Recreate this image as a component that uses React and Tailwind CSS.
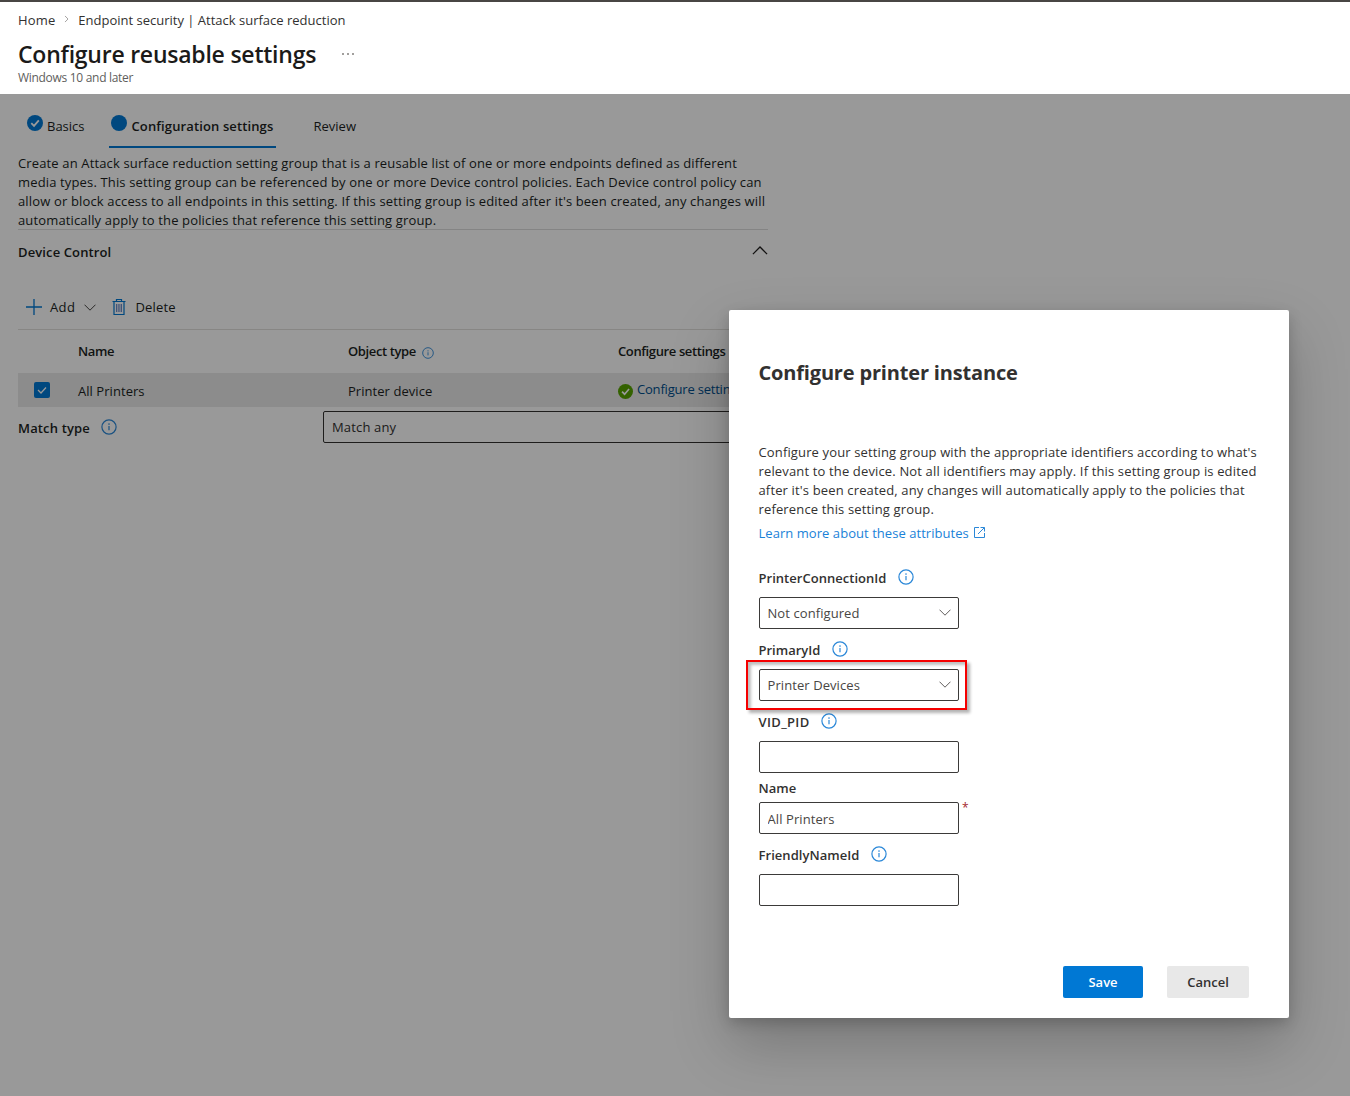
import React, { useState } from 'react';
import clsx from 'clsx';

const InfoIcon = ({ className }) => (
  <svg className={className} viewBox="0 0 16 16" fill="none">
    <circle cx="8" cy="8" r="7.1" stroke="#2b88d8" strokeWidth="1.2" />
    <path d="M8 7v4.2" stroke="#2b88d8" strokeWidth="1.2" />
    <circle cx="8" cy="5.1" r="0.8" fill="#2b88d8" />
  </svg>
);

const ChevronIcon = ({ className }) => (
  <svg className={className} viewBox="0 0 12 7" fill="none">
    <path d="M0.5 0.7L6 6.2L11.5 0.7" stroke="currentColor" strokeWidth="1" />
  </svg>
);

const CheckCircleIcon = ({ className }) => (
  <svg className={className} viewBox="0 0 16 16">
    <circle cx="8" cy="8" r="8" fill="currentColor" />
    <path d="M4.3 8.2L7 10.9L11.8 5.4" fill="none" stroke="#fff" strokeWidth="1.8" />
  </svg>
);

const TrashIcon = () => (
  <svg className="h-4 w-3.5" viewBox="0 0 14 16" fill="none">
    <path d="M0.5 2.5h13M4.5 2.5v-2h5v2M2 2.5v13h10v-13" stroke="#0078d4" strokeWidth="1.2" />
    <path d="M4.5 5v8M6.2 5v8M7.9 5v8M9.5 5v8" stroke="#5c7fc4" strokeWidth="0.9" />
  </svg>
);

const ExternalIcon = () => (
  <svg className="mb-[3px] h-[11px] w-[11px]" viewBox="0 0 11 11" fill="none" stroke="#2b88d8">
    <path d="M5 0.5H0.5v10h10V6" />
    <path d="M6.5 0.5h4v4M10.3 0.7L4 7" />
  </svg>
);

const FieldLabel = ({ children, info = true, className }) => (
  <div className="flex h-5 items-center">
    <span className={clsx('-ml-[0.5px] pt-0.5 text-[13px] font-semibold', className)}>{children}</span>
    {info && <InfoIcon className="mb-[3px] ml-[11.5px] h-4 w-4" />}
  </div>
);

const boxClass = 'flex h-8 w-[200px] items-center rounded-[2px] border border-[#3b3a39] bg-white px-[7.5px] pt-px text-[13px] tracking-[0.08px] text-[#484644]';

const SelectBox = ({ value }) => (
  <button className={clsx(boxClass, 'justify-between')}>
    <span>{value}</span>
    <ChevronIcon className="mb-0.5 h-[7px] w-3 text-[#605e5c]" />
  </button>
);

const TextBox = ({ value, onChange }) => (
  <input className={boxClass} value={value} onChange={(e) => onChange(e.target.value)} />
);

const Lines = ({ lines, className }) => (
  <p className={clsx('text-[13px] leading-[19px] tracking-[0.147px] whitespace-nowrap', className)}>
    {lines.map((line) => (
      <span key={line} className="block first:tracking-[0.14px]">{line}</span>
    ))}
  </p>
);

const groupDescription = [
  'Create an Attack surface reduction setting group that is a reusable list of one or more endpoints defined as different',
  'media types. This setting group can be referenced by one or more Device control policies. Each Device control policy can',
  "allow or block access to all endpoints in this setting. If this setting group is edited after it's been created, any changes will",
  'automatically apply to the policies that reference this setting group.',
];

const instanceDescription = [
  "Configure your setting group with the appropriate identifiers according to what's",
  'relevant to the device. Not all identifiers may apply. If this setting group is edited',
  "after it's been created, any changes will automatically apply to the policies that",
  'reference this setting group.',
];

const PageHeader = () => (
  <header className="h-[94px] border-t-2 border-[#484644] bg-white pl-[18px]">
    <nav className="flex h-9 items-center pt-px text-[13px] text-[#323130]">
      <span className="tracking-[0.15px]">Home</span>
      <ChevronIcon className="mx-[8px] mb-[3px] h-1 w-[7px] -rotate-90 text-[#605e5c]" />
      <span>Endpoint security | Attack surface reduction</span>
    </nav>
    <div className="flex h-8 items-center">
      <h1 className="text-[23px] font-semibold tracking-[-0.23px] text-[#1b1a19]">Configure reusable settings</h1>
      <div className="ml-[26px] flex gap-[3px]">
        <i className="h-0.5 w-0.5 bg-[#a19f9d]" />
        <i className="h-0.5 w-0.5 bg-[#a19f9d]" />
        <i className="h-0.5 w-0.5 bg-[#a19f9d]" />
      </div>
    </div>
    <p className="text-[12px] leading-4 tracking-[-0.3px] text-[#605e5c]">Windows 10 and later</p>
  </header>
);

const Tabs = () => (
  <div className="flex h-[54px] pl-[9px] text-[13px]">
    <div className="flex w-[57px] pt-[21px]">
      <CheckCircleIcon className="h-4 w-4 shrink-0 text-[#0078d4]" />
      <span className="ml-1 leading-[22px]">Basics</span>
    </div>
    <div className="ml-[25px] flex w-[167px] border-b-2 border-[#0078d4] pt-[21px] pl-0.5">
      <i className="h-4 w-4 shrink-0 rounded-full bg-[#0078d4]" />
      <span className="ml-[4.5px] leading-[22px] font-semibold tracking-[0.12px] whitespace-nowrap">Configuration settings</span>
    </div>
    <span className="ml-[37.5px] pt-[21px] leading-[22px]">Review</span>
  </div>
);

const DeviceTable = () => (
  <div className="w-[750px] text-[13px]">
    <div className="flex h-11 items-center border-t border-[#e1dfdd] font-semibold tracking-[-0.38px]">
      <span className="ml-[60px] w-[270px]">Name</span>
      <span className="flex w-[270px] items-center">
        Object type
        <InfoIcon className="mt-0.5 ml-1.5 h-3 w-3" />
      </span>
      <span>Configure settings</span>
    </div>
    <div className="flex h-[34px] items-center bg-[#e9e9e9]">
      <div className="ml-4 flex h-4 w-4 items-center justify-center rounded-[2px] bg-[#0078d4]">
        <svg className="h-2.5 w-2.5" viewBox="0 0 10 10" fill="none">
          <path d="M1 5L4 8L9 2.5" stroke="#fff" strokeWidth="1.3" />
        </svg>
      </div>
      <span className="ml-7 w-[270px] pt-[3px] tracking-[0.05px]">All Printers</span>
      <span className="w-[270px] pt-[3px] tracking-[0.05px]">Printer device</span>
      <CheckCircleIcon className="mt-0.5 h-[15px] w-[15px] text-[#57a300]" />
      <span className="ml-1 tracking-[-0.2px] text-[#004e8c]">Configure settings</span>
    </div>
  </div>
);

const ConfigurationPage = () => (
  <main className="h-[1002px] bg-white pl-[18px] text-[#201f1e]">
    <Tabs />
    <Lines lines={groupDescription} className="mt-1.5 h-[75px]" />
    <div className="flex h-[46px] w-[750px] items-center justify-between border-t border-[#dddddd] text-[13px]">
      <span className="font-semibold tracking-[0.12px]">Device Control</span>
      <ChevronIcon className="mb-1 h-[9px] w-4 rotate-180" />
    </div>
    <div className="mt-[16px] flex h-[33px] items-center pl-2 text-[13px] tracking-[0.15px]">
      <svg className="mb-px h-4 w-4" viewBox="0 0 16 16">
        <path d="M8 0v16M0 8h16" stroke="#0078d4" strokeWidth="1.3" />
      </svg>
      <span className="ml-2 w-[26px] tracking-[0.4px]">Add</span>
      <ChevronIcon className="mb-px ml-[7.5px] h-[7px] w-3 text-[#484644]" />
      <div className="mb-px ml-[16.5px]"><TrashIcon /></div>
      <span className="ml-[9.5px]">Delete</span>
    </div>
    <div className="mt-[5px]">
      <DeviceTable />
    </div>
    <div className="mt-1 flex w-[750px] items-center text-[13px]">
      <div className="flex w-[305px] items-center">
        <span className="pt-[3px] font-semibold tracking-[0.15px]">Match type</span>
        <InfoIcon className="mb-px ml-[11px] h-4 w-4" />
      </div>
      <div className="flex h-8 flex-1 items-center rounded-[2px] border border-[#323130] px-2 pt-px tracking-[0.15px] text-[#323130]">
        Match any
      </div>
    </div>
  </main>
);

const PrinterDialog = () => {
  const [vidPid, setVidPid] = useState('');
  const [name, setName] = useState('All Printers');
  const [friendlyName, setFriendlyName] = useState('');

  return (
    <section className="absolute top-[310px] left-[729px] flex h-[708px] w-[560px] flex-col rounded-[2px] bg-white pt-12 pl-[30px] text-[#323130] shadow-[0_26px_58px_rgba(0,0,0,0.22),0_5px_14px_rgba(0,0,0,0.18)]">
      <h2 className="-ml-[0.5px] text-[20px] leading-[30px] font-bold tracking-[-0.17px]">Configure printer instance</h2>
      <Lines lines={instanceDescription} className="mt-[55px] -ml-[0.5px]" />
      <a className="mt-[5px] -ml-[0.5px] flex h-5 items-center gap-[5px] text-[13px] tracking-[0.05px] text-[#1a82d8]">
        Learn more about these attributes
        <ExternalIcon />
      </a>
      <div className="mt-[24px] flex flex-col">
        <FieldLabel className="tracking-[0.03px]">PrinterConnectionId</FieldLabel>
        <div className="mt-[9px]"><SelectBox value="Not configured" /></div>
        <div className="mt-[11px]"><FieldLabel>PrimaryId</FieldLabel></div>
        <div className="relative mt-[9px]">
          <SelectBox value="Printer Devices" />
          <div className="pointer-events-none absolute -top-[9px] -left-[13px] h-[50px] w-[221px] border-2 border-[#f50000] shadow-[3px_3px_3px_rgba(0,0,0,0.3),inset_3px_3px_3px_rgba(0,0,0,0.25)]" />
        </div>
        <div className="mt-[11px]"><FieldLabel className="tracking-[0.35px]">VID_PID</FieldLabel></div>
        <div className="mt-[9px]"><TextBox value={vidPid} onChange={setVidPid} /></div>
        <div className="mt-[5px]"><FieldLabel info={false}>Name</FieldLabel></div>
        <div className="mt-1 flex">
          <TextBox value={name} onChange={setName} />
          <span className="ml-[3px] text-[12px] leading-[11px] text-[#a4262c]">*</span>
        </div>
        <div className="mt-[11px]"><FieldLabel className="tracking-[0.05px]">FriendlyNameId</FieldLabel></div>
        <div className="mt-[9px]"><TextBox value={friendlyName} onChange={setFriendlyName} /></div>
      </div>
      <div className="mt-[60px] flex justify-end gap-6 pr-10 text-[13px] font-semibold">
        <button className="h-8 w-20 rounded-[2px] bg-[#0078d4] pt-px text-white">Save</button>
        <button className="h-8 w-[82px] rounded-[2px] bg-[#e8e8e8] pt-px">Cancel</button>
      </div>
    </section>
  );
};

const App = () => (
  <div className="relative h-[1096px] w-[1350px] overflow-hidden font-['Segoe_UI','Open_Sans',sans-serif]">
    <PageHeader />
    <ConfigurationPage />
    <div className="absolute inset-x-0 top-[94px] bottom-0 bg-black/40" />
    <PrinterDialog />
  </div>
);

export default App;
